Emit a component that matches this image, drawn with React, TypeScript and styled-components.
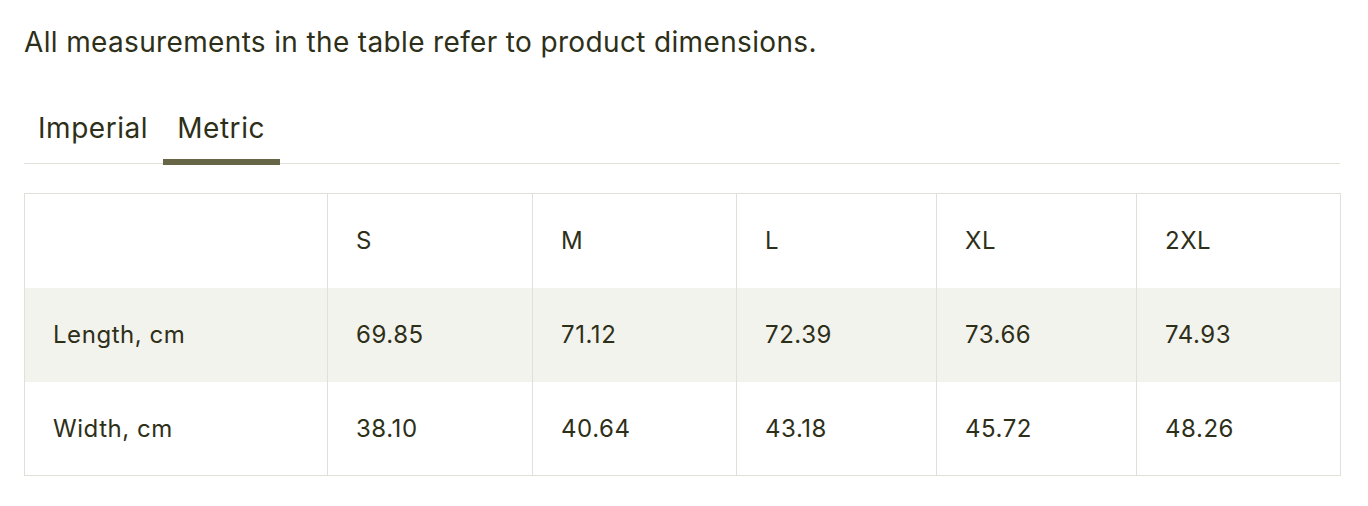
import React, { useState } from "react";
import styled, { createGlobalStyle } from "styled-components";

const GlobalStyle = createGlobalStyle`
  html, body { margin: 0; padding: 0; background: #ffffff; }
  body { font-family: Inter, "Noto Sans", sans-serif; color: #2e2f19; }
  * { box-sizing: border-box; }
`;

const Page = styled.div`
  padding: 24px 28px 0 24px;
  width: 1368px;
`;

const Intro = styled.p`
  margin: 0;
  font-size: 28px;
  letter-spacing: 0.35px;
  line-height: 36px;
  color: #2e2f19;
`;

const TabBar = styled.div`
  display: flex;
  margin-top: 50px;
  border-bottom: 1px solid #e0e0d9;
  height: 54px;
`;

const Tab = styled.button<{ $active?: boolean }>`
  position: relative;
  background: none;
  border: none;
  padding: 0 15px 0 14px;
  font-family: inherit;
  font-size: 28px;
  letter-spacing: 0.55px;
  color: #2e2f19;
  cursor: pointer;
  height: 54px;
  display: flex;
  align-items: flex-start;
  line-height: 36px;
  &::after {
    content: "";
    position: absolute;
    left: 0;
    right: 0;
    bottom: -1px;
    height: 6px;
    background: ${(p) => (p.$active ? "#666546" : "transparent")};
  }
`;

const Table = styled.table`
  margin-top: 29px;
  width: 1316px;
  border-collapse: collapse;
  table-layout: fixed;
  border: 1px solid #e0e0d9;
`;

const Row = styled.tr<{ $shade?: boolean }>`
  background: ${(p) => (p.$shade ? "#f3f3ee" : "#ffffff")};
  height: 94px;
`;

const Cell = styled.td`
  border-left: 1px solid #e0e0d9;
  border-right: 1px solid #e0e0d9;
  padding: 0 0 0 28px;
  font-size: 24px;
  letter-spacing: 0.55px;
  color: #2e2f19;
  vertical-align: middle;
  text-align: left;
  font-weight: 400;
`;

const sizes = ["S", "M", "L", "XL", "2XL"];
const rows = [
  { label: "Length, cm", values: ["69.85", "71.12", "72.39", "73.66", "74.93"] },
  { label: "Width, cm", values: ["38.10", "40.64", "43.18", "45.72", "48.26"] },
];
const colWidths = [303, 205, 204, 200, 200, 204];

export default function App() {
  const [tab, setTab] = useState("Metric");
  return (
    <>
      <GlobalStyle />
      <Page>
        <Intro>All measurements in the table refer to product dimensions.</Intro>
        <TabBar>
          {["Imperial", "Metric"].map((t) => (
            <Tab key={t} $active={tab === t} onClick={() => setTab(t)}>
              {t}
            </Tab>
          ))}
        </TabBar>
        <Table>
          <colgroup>
            {colWidths.map((w, i) => (
              <col key={i} style={{ width: w }} />
            ))}
          </colgroup>
          <tbody>
            <Row>
              <Cell as="th" />
              {sizes.map((s) => (
                <Cell as="th" key={s}>{s}</Cell>
              ))}
            </Row>
            {rows.map((r, i) => (
              <Row key={r.label} $shade={i === 0}>
                <Cell>{r.label}</Cell>
                {r.values.map((v, j) => (
                  <Cell key={j}>{v}</Cell>
                ))}
              </Row>
            ))}
          </tbody>
        </Table>
      </Page>
    </>
  );
}
